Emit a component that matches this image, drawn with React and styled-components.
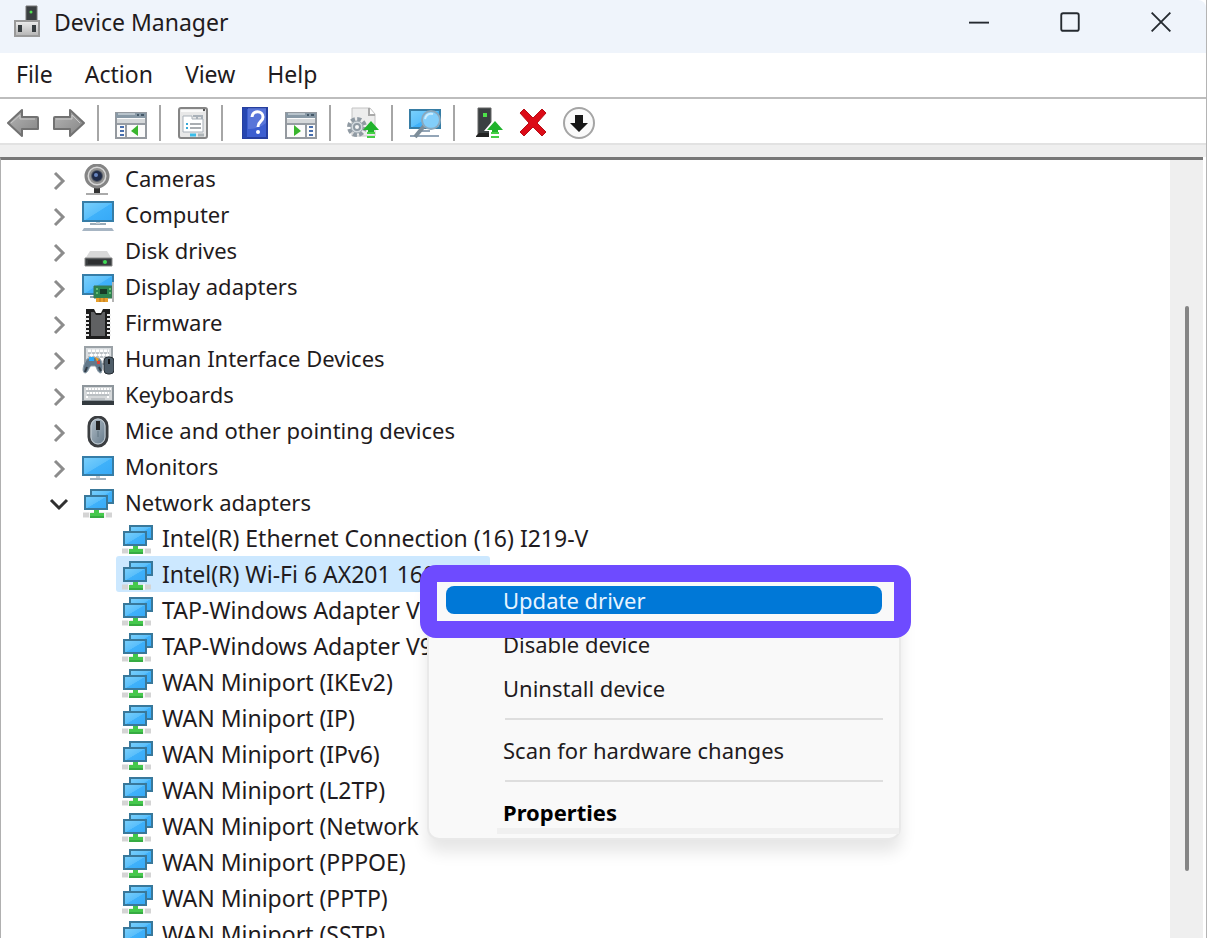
import React, { useState } from "react";
import styled, { createGlobalStyle } from "styled-components";

const GlobalStyle = createGlobalStyle`
  * {
    box-sizing: border-box;
  }
  body {
    margin: 0;
    background: #ffffff;
    color: #1f1b20;
    font-family: "Noto Sans", "Open Sans", sans-serif;
    font-size: 22px;
  }
  button {
    border: 0;
    padding: 0;
    background: none;
    color: inherit;
    font: inherit;
  }
  svg {
    display: block;
    flex: none;
  }
`;

const Window = styled.div`
  display: flex;
  flex-direction: column;
  height: 100vh;
  overflow: hidden;
  border-right: 1px solid #b4b4b4;
`;

const TitleBar = styled.header`
  display: flex;
  align-items: flex-start;
  flex: none;
  height: 53px;
  padding-left: 12px;
  background: #eff4fb;
  border-top-right-radius: 8px;
`;

const TitleIcon = styled.div`
  padding-top: 5px;
`;

const Title = styled.h1`
  flex: 1;
  margin: 0;
  padding-left: 10px;
  font-size: 23px;
  font-weight: 400;
  line-height: 44px;
`;

const WindowButton = styled.button`
  display: flex;
  align-items: center;
  justify-content: center;
  width: 91px;
  height: 43px;
`;

const MenuBar = styled.nav`
  display: flex;
  flex: none;
  gap: 32px;
  height: 46px;
  padding: 0 16px;
  border-bottom: 2px solid #bdbdbd;
`;

const MenuBarItem = styled.button`
  height: 42px;
  font-size: 23px;
  line-height: 42px;
`;

const Toolbar = styled.div`
  display: flex;
  align-items: center;
  flex: none;
  height: 46px;
  padding-top: 4px;
  border-bottom: 2px solid #e2e2e2;
`;

const ToolButton = styled.button`
  display: flex;
  align-items: center;
  justify-content: center;
  width: 46px;
  height: 40px;
`;

const ToolDivider = styled.span`
  width: 2px;
  height: 36px;
  margin: 0 9px 0 5px;
  background: #a6a6a6;
`;

const Body = styled.main`
  display: flex;
  flex: 1;
  min-height: 0;
  margin-right: 3px;
  border-top: 3px solid #777777;
  border-left: 1px solid #b0b0b0;
`;

const BodyEdge = styled.div`
  flex: none;
  height: 12px;
  background: #efefef;
`;

const TreePane = styled.div`
  flex: 1;
  min-width: 0;
  overflow: hidden;
`;

const List = styled.ul`
  list-style: none;
  margin: 0;
  padding: 0 0 0 ${props => (props.$nested ? "75px" : "40px")};
`;

const Row = styled.div`
  position: relative;
  display: flex;
  align-items: center;
  width: fit-content;
  height: 36px;
  padding: 0 5px;
  gap: ${props => (props.$nested ? "9px" : "11px")};
  border-radius: 3px;
  background: ${props => (props.$selected ? "#cce8ff" : "transparent")};
  font-size: ${props => (props.$nested ? "23px" : "22px")};

  > svg {
    margin-top: 4px;
  }
`;

const Toggle = styled.button`
  display: flex;
  align-items: center;
  justify-content: center;
  width: 25px;
  height: 36px;
  padding-top: 6px;
`;

const Label = styled.span`
  line-height: 36px;
  white-space: nowrap;
`;

const ScrollTrack = styled.div`
  display: grid;
  grid-template-rows: 146fr 564fr 67fr;
  justify-items: center;
  flex: none;
  width: 33px;
  background: #efefef;
`;

const ScrollThumb = styled.div`
  grid-row: 2;
  width: 4px;
  border-radius: 2px;
  background: #858585;
`;

const ContextMenu = styled.div`
  position: absolute;
  z-index: 1;
  top: 18px;
  left: 311px;
  width: 474px;
  padding: 10px 0 4px;
  border: 2px solid #e9e9e9;
  border-radius: 12px;
  background: #f9f9f9;
  box-shadow: 0 12px 16px rgba(0, 0, 0, 0.1);
  font-size: 22px;
`;

const MenuItem = styled.button`
  display: block;
  width: 100%;
  padding: 0 0 0 74px;
  line-height: 44px;
  text-align: left;
`;

const DefaultItem = styled(MenuItem)`
  width: calc(100% - 68px);
  margin-left: 68px;
  padding-left: 6px;
  color: #000000;
  font-weight: 700;
  box-shadow: inset 0 -6px #f0f0f0;
`;

const ActiveItem = styled(MenuItem)`
  width: calc(100% - 34px);
  margin: 0 17px 8px;
  padding-left: 57px;
  border-radius: 8px;
  background: #0078d7;
  color: #e8f4ff;
  line-height: 28px;
`;

const MenuRule = styled.hr`
  height: 2px;
  margin: 8px 16px 8px 76px;
  border: 0;
  background: #dedede;
`;

const Highlight = styled.div`
  position: absolute;
  top: -11px;
  left: -9px;
  width: 491px;
  height: 73px;
  pointer-events: none;
  border: 17px solid #6e4bff;
  border-radius: 16px;
`;

const Icon = ({ children, size = 32 }) => (
  <svg width={size} height={size} viewBox="0 0 32 32" fill="none" aria-hidden="true">
    {children}
  </svg>
);

const Gradients = () => (
  <svg width="0" height="0" aria-hidden="true">
    <defs>
      <linearGradient id="screen" x1="0" y1="0" x2="1" y2="1">
        <stop offset="0" stopColor="#7bd0fb" />
        <stop offset="0.5" stopColor="#5abffb" />
        <stop offset="0.52" stopColor="#3fb1fa" />
        <stop offset="1" stopColor="#36a9f7" />
      </linearGradient>
      <linearGradient id="arrow" x1="0" y1="0" x2="1" y2="1">
        <stop offset="0" stopColor="#b5b5b5" />
        <stop offset="1" stopColor="#858585" />
      </linearGradient>
      <linearGradient id="steel" x1="0" y1="0" x2="0" y2="1">
        <stop offset="0" stopColor="#eeeeee" />
        <stop offset="1" stopColor="#b4b4b4" />
      </linearGradient>
      <linearGradient id="mouse" x1="0" y1="0" x2="1" y2="1">
        <stop offset="0" stopColor="#b7c3cc" />
        <stop offset="1" stopColor="#5f7485" />
      </linearGradient>
    </defs>
  </svg>
);

const DeviceManagerIcon = () => (
  <Icon>
    <path d="M14 1h11v15H14z" fill="#3a3f41" stroke="#777" />
    <circle cx="19" cy="7" r="1.5" fill="#52e052" />
    <path d="M3 16h24v15H3z" fill="url(#steel)" stroke="#999" strokeWidth="2" />
    <path d="M6 20h4v7H6zM20 20h4v7h-4z" fill="#373d40" />
    <path d="M2 31h26" stroke="#9a9a9a" strokeWidth="2" />
  </Icon>
);

const BackIcon = () => (
  <Icon>
    <path d="M1 16L15 3v7h15c1 0 1 0 1 1v11H15v7z" fill="url(#arrow)" stroke="#727272" strokeWidth="2" strokeLinejoin="round" />
    <path d="M4 16l9-8v4h15" stroke="#c9c9c9" />
  </Icon>
);

const ForwardIcon = () => (
  <Icon>
    <path d="M31 16L17 3v7H2c-1 0-1 0-1 1v11h16v7z" fill="url(#arrow)" stroke="#727272" strokeWidth="2" strokeLinejoin="round" />
    <path d="M3 12h16V8l8 8" stroke="#c9c9c9" />
  </Icon>
);

const PaneFrame = () => (
  <>
    <path d="M1 6h30v25H1z" fill="#fbfbfb" stroke="#94999f" strokeWidth="2" />
    <path d="M1 6h30v5H1z" fill="#8899a6" />
    <path d="M3 7h17" stroke="#b8c3cb" strokeWidth="2" />
    <path d="M22 8h2M26 8h3" stroke="#465969" strokeWidth="2" />
    <path d="M2 12h28v4H2z" fill="#d5d8da" />
  </>
);

const ConsoleTreeIcon = () => (
  <Icon>
    <PaneFrame />
    <path d="M11 16v14M2 17h28" stroke="#969ca3" strokeWidth="2" />
    <path d="M5 20h4M5 24h4M5 28h4" stroke="#486fae" strokeWidth="2" />
    <path d="M23 18v11l-7-5z" fill="#39b52d" />
  </Icon>
);

const ActionPaneIcon = () => (
  <Icon>
    <PaneFrame />
    <path d="M21 16v14M2 17h28" stroke="#969ca3" strokeWidth="2" />
    <path d="M24 20h4M24 24h4M24 28h4" stroke="#486fae" strokeWidth="2" />
    <path d="M9 18v11l7-5z" fill="#39b52d" />
  </Icon>
);

const PropertiesIcon = () => (
  <Icon>
    <rect x="2" y="1" width="28" height="30" rx="2" fill="#e8e8e8" stroke="#858585" strokeWidth="2" />
    <path d="M4 4h22" stroke="#fafafa" strokeWidth="2" />
    <path d="M26 3h2" stroke="#555" strokeWidth="2" />
    <path d="M6 9h9v3h11v13H6z" fill="#fff" stroke="#a9b1b9" />
    <path d="M16 9h4v3M21 9h4v3" stroke="#a9b1b9" strokeWidth="2" />
    <path d="M9 17h2M9 21h2" stroke="#39a9d8" strokeWidth="2" />
    <path d="M13 17h11M13 21h11" stroke="#a9adb1" strokeWidth="2" />
    <path d="M13 28h6" stroke="#39bde9" strokeWidth="3" />
    <path d="M21 28h6" stroke="#adb4b7" strokeWidth="3" />
  </Icon>
);

const HelpIcon = () => (
  <Icon>
    <path d="M3 0h26v32H3z" fill="#3c5ed0" />
    <path d="M4 1h24v30H4z" stroke="#263f9f" strokeWidth="2" />
    <path d="M4 1h4v30H4z" fill="#2646b1" />
    <path d="M9 1h18v15c-7 5-12 6-18 6z" fill="#6a86df" opacity="0.6" />
    <path d="M13 10c0-7 11-7 11 0 0 5-5 4-5 10" stroke="#fff" strokeWidth="3" />
    <circle cx="19" cy="25" r="2" fill="#fff" />
  </Icon>
);

const GreenArrow = () => (
  <>
    <path d="M24 14l8 9h-5v4h-6v-4h-5z" fill="#20b32c" />
    <path d="M20 26h8M20 30h8" stroke="#45cf45" strokeWidth="2" />
  </>
);

const UpdateIcon = () => (
  <Icon>
    <path d="M5 1h18l5 6v22H5z" fill="#ededed" stroke="#c4c4c4" />
    <path d="M22 1v7h6" fill="#fff" stroke="#a9a9a9" strokeWidth="2" />
    <circle cx="10" cy="20" r="8" stroke="#909aa3" strokeWidth="4" strokeDasharray="4 2.28" />
    <circle cx="10" cy="20" r="6" fill="#d4dadf" stroke="#9ba5ad" />
    <circle cx="10" cy="20" r="3" fill="#f7f7f7" stroke="#8f9aa3" strokeWidth="2" />
    <GreenArrow />
  </Icon>
);

const ScanIcon = () => (
  <Icon>
    <path d="M1 3h30v18H1z" fill="url(#screen)" stroke="#377da5" strokeWidth="2" />
    <path d="M1 29h29M12 24h9" stroke="#93a5b7" strokeWidth="2" />
    <path d="M15 19L6 30" stroke="#7d8d99" strokeWidth="4" />
    <circle cx="22" cy="13" r="9" fill="#8fd3fa" fillOpacity="0.85" stroke="#8aa8bd" strokeWidth="2" />
    <path d="M16 12c1-4 4-6 8-5" stroke="#caedff" strokeWidth="2" />
  </Icon>
);

const DriverIcon = () => (
  <Icon>
    <path d="M7 1h13v27H7z" fill="#3b4042" stroke="#666" />
    <path d="M5 29l3-3h10v4H5z" fill="#222" />
    <path d="M12 6h4v4h-4z" fill="#4de249" />
    <path d="M23 12l9 11v9H18v-8h-5z" fill="#fff" />
    <GreenArrow />
  </Icon>
);

const RemoveIcon = () => (
  <Icon>
    <path d="M3 6l4-4 9 9 9-9 4 4-9 10 9 9-4 4-9-9-9 9-4-4 9-9z" fill="#dc0b17" stroke="#b80d16" />
  </Icon>
);

const DisableIcon = () => (
  <Icon>
    <circle cx="16" cy="16" r="15" fill="#fafafa" stroke="#a5a5a5" strokeWidth="2" />
    <path d="M12 8h8v8h5l-9 9-9-9h5z" fill="#171717" />
  </Icon>
);

const CameraIcon = () => (
  <Icon>
    <path d="M4 30h22" stroke="#aaa" strokeWidth="2" />
    <path d="M12 24h6v5h-6z" fill="#333" />
    <circle cx="15" cy="12" r="11" fill="#d7d7d7" stroke="#858585" strokeWidth="3" />
    <circle cx="15" cy="12" r="7" fill="#555b65" stroke="#929292" strokeWidth="2" />
    <circle cx="15" cy="12" r="5" fill="#202b48" />
    <circle cx="14" cy="11" r="2" fill="#6785bf" />
  </Icon>
);

const ComputerIcon = () => (
  <Icon>
    <path d="M1 2h30v19H1z" fill="url(#screen)" stroke="#367da7" strokeWidth="2" />
    <path d="M8 24h16" stroke="#9aabb8" strokeWidth="2" />
    <path d="M14 22h4v2h-4z" fill="#c3cdd5" />
    <path d="M2 28h28l2 3H0z" fill="#a7b5c3" />
  </Icon>
);

const DiskIcon = () => (
  <Icon>
    <path d="M8 15h17l5 8H3z" fill="#d9d9d9" />
    <path d="M3 22h27v8H3z" fill="#393d3f" stroke="#8a8a8a" />
    <path d="M6 25h14M6 27h14" stroke="#222" />
    <circle cx="23" cy="26" r="2" fill="#40dc55" />
  </Icon>
);

const DisplayIcon = () => (
  <Icon>
    <path d="M1 3h30v19H1z" fill="url(#screen)" stroke="#367da7" strokeWidth="2" />
    <path d="M8 25h8" stroke="#8fa5b4" strokeWidth="2" />
    <path d="M12 14h18v12H12z" fill="#2c8550" stroke="#3c7752" />
    <path d="M18 17h7v5h-7z" fill="#173c29" />
    <path d="M14 17h2M14 21h2M27 17h2M27 21h2" stroke="#63bd75" strokeWidth="2" />
    <path d="M14 26h12v4H14z" fill="#e7a02d" />
    <path d="M18 26v4M22 26v4" stroke="#ba7020" />
    <path d="M31 10v20" stroke="#b4b4b4" strokeWidth="2" />
  </Icon>
);

const FirmwareIcon = () => (
  <Icon>
    <path d="M4 1h8l2 4h5l2-4h7v30H4z" fill="#1d1d1d" />
    <path d="M9 4h3l2 3h5l2-3h2v24H9z" fill="#606163" />
    <path d="M5 6v22M27 6v22" stroke="#eee" strokeWidth="4" strokeDasharray="2 2" />
  </Icon>
);

const HidIcon = () => (
  <Icon>
    <path d="M3 3h27v17H3z" fill="#d9dde0" stroke="#9ba2a7" strokeWidth="2" />
    <path d="M6 7h21M8 11h19M6 15h21" stroke="#fff" strokeDasharray="3 1" strokeWidth="3" />
    <path d="M6 9h21M6 13h21" stroke="#969ea4" strokeDasharray="3 1" />
    <path d="M5 15c4-2 9-2 13 0 3 4 3 10 1 14-4 0-4-6-6-7H9c-2 1-3 7-6 7-4-1-1-10 2-14z" fill="#62788a" stroke="#91a0ab" />
    <path d="M5 23l-2 5M17 23l2 4" stroke="#303b44" strokeWidth="2" />
    <path d="M7 13h5v4H7z" fill="#2caafa" />
    <path d="M13 13l4 2-2 3z" fill="#f0a020" />
    <path d="M15 17h3v3h-3z" fill="#e34234" />
    <rect x="22" y="13" width="10" height="17" rx="4" fill="#4e5d69" stroke="#252c32" />
    <path d="M27 15v5" stroke="#111" strokeWidth="2" />
  </Icon>
);

const KeyboardIcon = () => (
  <Icon>
    <path d="M1 6h30v15H1z" fill="#d5d8da" stroke="#8e969c" strokeWidth="2" />
    <path d="M4 9h25M5 13h22M4 17h3M25 17h3" stroke="#fff" strokeWidth="2" strokeDasharray="2 1" />
    <path d="M4 11h25M5 15h22M9 19h14" stroke="#a0a7ac" />
    <path d="M0 21h32v4H0z" fill="#333a3f" />
  </Icon>
);

const MouseIcon = () => (
  <Icon>
    <rect x="7" y="1" width="18" height="29" rx="9" fill="url(#mouse)" stroke="#3b3e41" strokeWidth="3" />
    <rect x="9" y="3" width="14" height="25" rx="7" stroke="#c8d0d6" />
    <path d="M16 5v9" stroke="#222" strokeWidth="4" />
    <path d="M16 15v6" stroke="#637683" />
  </Icon>
);

const MonitorIcon = () => (
  <Icon>
    <path d="M1 5h30v18H1z" fill="url(#screen)" stroke="#367da7" strokeWidth="2" />
    <path d="M8 27h16" stroke="#a1b1be" strokeWidth="2" />
    <path d="M14 24h4v2h-4z" fill="#c3cdd5" />
  </Icon>
);

const NetworkIcon = () => (
  <Icon>
    <path d="M9 2h22v13H9z" fill="url(#screen)" stroke="#39789a" strokeWidth="2" />
    <path d="M3 8h22v13H3z" fill="url(#screen)" stroke="#39789a" strokeWidth="2" />
    <path d="M1 27h29" stroke="#d4d4d4" strokeWidth="5" />
    <path d="M8 24v6M23 24v6" stroke="#f5f5f5" strokeWidth="2" />
    <path d="M12 22h5v3h5v5H8v-5h4z" fill="#45c84c" />
    <path d="M8 29h14" stroke="#36ab42" strokeWidth="2" />
  </Icon>
);

const Chevron = ({ open }) => (
  <svg width="20" height="20" viewBox="0 0 20 20" fill="none" aria-hidden="true">
    {open ? (
      <path d="M2 5l8 8 8-8" stroke="#303030" strokeWidth="3" />
    ) : (
      <path d="M6 2l8 8-8 8" stroke="#8c8c8c" strokeWidth="3" />
    )}
  </svg>
);

const devices = [
  { name: "Cameras", icon: CameraIcon },
  { name: "Computer", icon: ComputerIcon },
  { name: "Disk drives", icon: DiskIcon },
  { name: "Display adapters", icon: DisplayIcon },
  { name: "Firmware", icon: FirmwareIcon },
  { name: "Human Interface Devices", icon: HidIcon },
  { name: "Keyboards", icon: KeyboardIcon },
  { name: "Mice and other pointing devices", icon: MouseIcon },
  { name: "Monitors", icon: MonitorIcon },
  {
    name: "Network adapters",
    icon: NetworkIcon,
    children: [
      "Intel(R) Ethernet Connection (16) I219-V",
      "Intel(R) Wi-Fi 6 AX201 160MHz",
      "TAP-Windows Adapter V9",
      "TAP-Windows Adapter V9",
      "WAN Miniport (IKEv2)",
      "WAN Miniport (IP)",
      "WAN Miniport (IPv6)",
      "WAN Miniport (L2TP)",
      "WAN Miniport (Network",
      "WAN Miniport (PPPOE)",
      "WAN Miniport (PPTP)",
      "WAN Miniport (SSTP)"
    ]
  }
];

const DeviceMenu = () => (
  <ContextMenu role="menu">
    <ActiveItem role="menuitem">Update driver</ActiveItem>
    <MenuItem role="menuitem">Disable device</MenuItem>
    <MenuItem role="menuitem">Uninstall device</MenuItem>
    <MenuRule />
    <MenuItem role="menuitem">Scan for hardware changes</MenuItem>
    <MenuRule />
    <DefaultItem role="menuitem">Properties</DefaultItem>
    <Highlight />
  </ContextMenu>
);

export default function App() {
  const [expanded, setExpanded] = useState("Network adapters");
  const [selected, setSelected] = useState(1);

  return (
    <Window>
      <GlobalStyle />
      <TitleBar>
        <TitleIcon>
          <DeviceManagerIcon />
        </TitleIcon>
        <Title>Device Manager</Title>
        <WindowButton aria-label="Minimize">
          <Icon size={20}>
            <path d="M0 17h32" stroke="#252a30" strokeWidth="3" />
          </Icon>
        </WindowButton>
        <WindowButton aria-label="Maximize">
          <Icon size={20}>
            <rect x="2" y="2" width="28" height="28" rx="3" stroke="#252a30" strokeWidth="3" />
          </Icon>
        </WindowButton>
        <WindowButton aria-label="Close">
          <Icon size={20}>
            <path d="M1 1l30 30M31 1L1 31" stroke="#252a30" strokeWidth="3" />
          </Icon>
        </WindowButton>
      </TitleBar>
      <MenuBar>
        <MenuBarItem>File</MenuBarItem>
        <MenuBarItem>Action</MenuBarItem>
        <MenuBarItem>View</MenuBarItem>
        <MenuBarItem>Help</MenuBarItem>
      </MenuBar>
      <Toolbar>
        <ToolButton aria-label="Back"><BackIcon /></ToolButton>
        <ToolButton aria-label="Forward"><ForwardIcon /></ToolButton>
        <ToolDivider />
        <ToolButton aria-label="Show console tree"><ConsoleTreeIcon /></ToolButton>
        <ToolDivider />
        <ToolButton aria-label="Properties"><PropertiesIcon /></ToolButton>
        <ToolDivider />
        <ToolButton aria-label="Help"><HelpIcon /></ToolButton>
        <ToolButton aria-label="Show action pane"><ActionPaneIcon /></ToolButton>
        <ToolDivider />
        <ToolButton aria-label="Update device"><UpdateIcon /></ToolButton>
        <ToolDivider />
        <ToolButton aria-label="Scan for changes"><ScanIcon /></ToolButton>
        <ToolDivider />
        <ToolButton aria-label="Add drivers"><DriverIcon /></ToolButton>
        <ToolButton aria-label="Uninstall"><RemoveIcon /></ToolButton>
        <ToolButton aria-label="Disable"><DisableIcon /></ToolButton>
      </Toolbar>
      <BodyEdge />
      <Body>
        <TreePane>
          <List>
            {devices.map(({ name, icon: DeviceIcon, children }) => (
              <li key={name}>
                <Row>
                  <Toggle
                    aria-label={`Expand ${name}`}
                    aria-expanded={expanded === name}
                    onClick={() => setExpanded(expanded === name ? "" : name)}
                  >
                    <Chevron open={expanded === name} />
                  </Toggle>
                  <DeviceIcon />
                  <Label>{name}</Label>
                </Row>
                {children && expanded === name && (
                  <List $nested>
                    {children.map((child, index) => (
                      <li key={index}>
                        <Row $nested $selected={selected === index} onClick={() => setSelected(index)}>
                          <NetworkIcon />
                          <Label>{child}</Label>
                          {selected === index && <DeviceMenu />}
                        </Row>
                      </li>
                    ))}
                  </List>
                )}
              </li>
            ))}
          </List>
        </TreePane>
        <ScrollTrack>
          <ScrollThumb />
        </ScrollTrack>
      </Body>
      <Gradients />
    </Window>
  );
}
